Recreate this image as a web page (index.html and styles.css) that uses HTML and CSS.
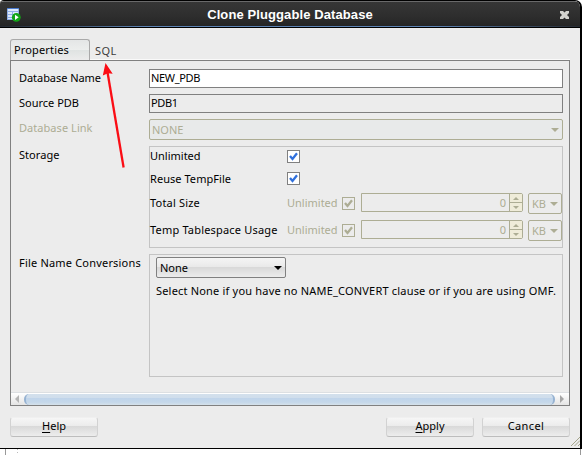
FILE: index.html
```html
<!DOCTYPE html>
<html lang="en">
<head>
<meta charset="utf-8">
<title>Clone Pluggable Database</title>
<link rel="stylesheet" href="styles.css">
</head>
<body>
<main class="window">
  <header class="titlebar">
    <svg class="app-icon" width="14" height="14" viewBox="0 0 14 14">
      <path fill="#8fade6" d="M0 0h12v12H0z"/>
      <path fill="#4a7bd0" d="M0 0h12v1H0z"/>
      <path fill="#dce8fb" d="M1 1h10v2H1zM1 4h4v2H1zM6 4h5v2H6zM1 7h4v2H1zM1 10h4v1H1z"/>
      <circle cx="9.3" cy="9.3" r="4.4" fill="#12a516"/>
      <path fill="#fff" d="M8 6.700v5.200l3.700-2.600z"/>
    </svg>
    <h1 class="title">Clone Pluggable Database</h1>
    <svg class="close" width="9" height="8" viewBox="0 0 9 8"><path d="M0 0h3l1.500 1.500L6 0h3v2L7 4l2 2v2H6L4.500 6.500 3 8H0V6l2-2-2-2z" fill="#d2d2ce"/></svg>
  </header>
  <nav class="tabs">
    <span class="tab tab-active"><span class="t-properties">Properties</span></span>
    <span class="tab tab-rest"><span class="t-sql">SQL</span></span>
  </nav>
  <section class="panel">
    <div class="form">
      <label class="t-dbname">Database Name</label>
      <div class="field field-edit"><span class="t-newpdb">NEW_PDB</span></div>
      <label class="t-source">Source PDB</label>
      <div class="field"><span class="t-pdb1">PDB1</span></div>
      <label class="t-link off">Database Link</label>
      <div class="combo combo-wide off"><span class="t-none-off">NONE</span><svg width="8" height="4" viewBox="0 0 8 4"><path d="M0 0h8L4 4z" fill="currentColor"/></svg></div>
      <label class="t-storage label-storage">Storage</label>
      <div class="group storage">
        <div class="row"><span class="name t-unl">Unlimited</span><span class="check"><svg width="9" height="9" viewBox="0 0 9 9"><path d="M1 4l2.500 3L8 1.200" fill="none" stroke="currentColor" stroke-width="2.300"/></svg></span></div>
        <div class="row"><span class="name t-reuse">Reuse TempFile</span><span class="check"><svg width="9" height="9" viewBox="0 0 9 9"><path d="M1 4l2.500 3L8 1.200" fill="none" stroke="currentColor" stroke-width="2.300"/></svg></span></div>
        <div class="row row-size">
          <span class="name t-total">Total Size</span>
          <span class="limit off t-unl">Unlimited</span><span class="check off"><svg width="9" height="9" viewBox="0 0 9 9"><path d="M1 4l2.500 3L8 1.200" fill="none" stroke="currentColor" stroke-width="2.300"/></svg></span>
          <div class="spinner off"><span class="value">0</span><span class="steps"><span class="step"><svg width="6" height="3" viewBox="0 0 6 3"><path d="M0 3h6L3 0z" fill="currentColor"/></svg></span><span class="step"><svg width="6" height="3" viewBox="0 0 6 3"><path d="M0 0h6L3 3z" fill="currentColor"/></svg></span></span></div>
          <div class="combo unit off"><span class="t-kb">KB</span><svg width="8" height="4" viewBox="0 0 8 4"><path d="M0 0h8L4 4z" fill="currentColor"/></svg></div>
        </div>
        <div class="row row-size">
          <span class="name t-temp">Temp Tablespace Usage</span>
          <span class="limit off t-unl">Unlimited</span><span class="check off"><svg width="9" height="9" viewBox="0 0 9 9"><path d="M1 4l2.500 3L8 1.200" fill="none" stroke="currentColor" stroke-width="2.300"/></svg></span>
          <div class="spinner off"><span class="value">0</span><span class="steps"><span class="step"><svg width="6" height="3" viewBox="0 0 6 3"><path d="M0 3h6L3 0z" fill="currentColor"/></svg></span><span class="step"><svg width="6" height="3" viewBox="0 0 6 3"><path d="M0 0h6L3 3z" fill="currentColor"/></svg></span></span></div>
          <div class="combo unit off"><span class="t-kb">KB</span><svg width="8" height="4" viewBox="0 0 8 4"><path d="M0 0h8L4 4z" fill="currentColor"/></svg></div>
        </div>
      </div>
      <label class="t-file label-file">File Name Conversions</label>
      <div class="group conversions">
        <div class="combo combo-none"><span class="t-none">None</span><svg width="8" height="4" viewBox="0 0 8 4"><path d="M0 0h8L4 4z" fill="currentColor"/></svg></div>
        <p class="hint t-hint">Select None if you have no NAME_CONVERT clause or if you are using OMF.</p>
      </div>
    </div>
    <div class="scrollbar">
      <svg width="4" height="8" viewBox="0 0 4 8"><path d="M4 0v8L0 4z" fill="#b4b4b4"/></svg>
      <span class="thumb"></span>
      <svg width="4" height="8" viewBox="0 0 4 8"><path d="M0 0v8l4-4z" fill="#a6a6a6"/></svg>
    </div>
  </section>
  <footer class="actions">
    <button class="btn btn-help"><span class="t-help"><u>H</u>elp</span></button>
    <button class="btn"><span class="t-apply"><u>A</u>pply</span></button>
    <button class="btn"><span class="t-cancel">Cancel</span></button>
  </footer>
  <svg class="grip" width="9" height="9" viewBox="0 0 9 9"><path d="M0 9L9 0M3.500 9L9 3.500M7 9l2-2" stroke="#a5a58c" fill="none"/></svg>
  <svg class="arrow" width="40" height="110" viewBox="0 0 40 110"><path d="M22.600 106.500L6.300 10" stroke="#fb0d15" stroke-width="2.300" fill="none"/><path d="M4.500 2l7.200 10.800-4.700-.6-5.200 2.200z" fill="#fb0d15"/></svg>
</main>
<div class="behind"></div>
</body>
</html>
```
FILE: styles.css
```css
* { box-sizing: border-box; }
body {
  margin: 0;
  width: 584px;
  height: 455px;
  overflow: hidden;
  background: #fff;
  color: #000;
  font: 11px/14px "Noto Sans", "Open Sans", sans-serif;
}
svg { display: block; flex: none; }
.window {
  position: relative;
  width: 582px;
  height: 449px;
  border: solid #000;
  border-width: 1px 2px 1px 0;
  border-radius: 4px 7px 0 0;
  background: #ececec;
  overflow: hidden;
}
.titlebar {
  display: flex;
  align-items: center;
  height: 27px;
  padding: 0 11px 0 7px;
  border-top: 1px solid #69696a;
  border-bottom: 1px solid #000;
  background: linear-gradient(90deg, #252a31, #5d83b4 25%, #5d83b4 75%, #252a31) bottom / 100% 1px no-repeat, linear-gradient(#363636, #2e2e2e 55%, #242424);
}
.title {
  flex: 1;
  margin: 0 1px 0 0;
  text-align: center;
  color: #fff;
  font: bold 13px/20px "Liberation Sans", sans-serif;
  letter-spacing: .1px;
}
.tabs { display: flex; height: 32px; padding: 11px 0 0 10px; }
.tab {
  display: flex;
  align-items: center;
  height: 21px;
  padding: 2px 0 0 5px;
  color: #3c3c3c;
}
.tab-rest { width: 480px; border-bottom: 1px solid #fafafa; padding-top: 3px; }
.tab-active {
  width: 80px;
  padding: 0 0 0 3px;
  border: 1px solid #a9a9a9;
  border-bottom: 0;
  border-radius: 3px 3px 0 0;
  background: linear-gradient(#e4e6e6, #eceeed 50%, #dfe3e2 51%, #ececec);
  color: #000;
}
.panel {
  display: flex;
  flex-direction: column;
  width: 560px;
  height: 346px;
  margin-left: 10px;
  border: 1px solid #808080;
}
.form {
  display: grid;
  grid-template-columns: 130px 414px;
  grid-template-rows: 19px 19px 21px 102px 123px;
  row-gap: 6px;
  padding: 8px 0 0 8px;
  flex: 1;
  white-space: nowrap;
}
.form > label { line-height: 17px; }
.form > .label-storage, .form > .label-file { line-height: 18px; }
.field { border: 1px solid #808080; padding-left: 1px; line-height: 16px; }
.field-edit { background: #fff; }
.combo {
  display: flex;
  align-items: center;
  justify-content: space-between;
  height: 21px;
  border: 1px solid #808080;
  border-radius: 2px;
  padding: 0 3px;
}
.off { color: #adad94; border-color: #adad94 !important; }
.combo-wide { padding: 0 3px 0 2px; background: #e8eaea; }
.group { border: 1px solid #c4c4c4; }
.row { display: flex; align-items: center; height: 23px; }
.storage .row:first-child { height: 18px; margin-bottom: 2px; }
.storage .row-size { height: 27px; }
.name { width: 137px; }
.limit { width: 55px; }
.row-size .name, .row-size .limit { padding-bottom: 2px; }
.check {
  display: grid;
  place-items: center;
  width: 13px;
  height: 13px;
  border: 1px solid #808080;
  background: #fff;
  color: #3070dc;
}
.check.off { background: #ececec; color: #adad94; }
.spinner {
  display: flex;
  align-items: center;
  width: 162px;
  height: 19px;
  margin: -2px 0 0 6px;
  border: 1px solid;
  border-radius: 0 2px 2px 0;
}
.value { flex: 1; text-align: right; padding-right: 3px; }
.steps { width: 13px; height: 17px; border-left: 1px solid; background: #efecd9; }
.step { display: grid; place-items: center; height: 8px; }
.step + .step { height: 9px; border-top: 1px solid; }
.unit { width: 34px; margin-left: 5px; }
.conversions { padding: 2px 6px; }
.combo-none { width: 130px; background: linear-gradient(#f5f5f5, #e9e9e9 48%, #d9d9d9 50%, #ececec); }
.hint { margin: 6px 0 0; }
.scrollbar {
  display: flex;
  align-items: center;
  gap: 5px;
  height: 13px;
  padding: 0 5px 0 4px;
  border-top: 1px solid #dcdfe2;
  background: linear-gradient(#fff, #e4e4e4);
}
.thumb {
  flex: 1;
  height: 11px;
  border: solid #97b3d2;
  border-width: 0 2px;
  border-radius: 5px;
  background: linear-gradient(#d3e0ec, #d0deec 35%, #c0d4ea 40%, #c5d8ea 75%, #d5e1ea);
}
.actions { display: flex; gap: 8px; margin: 11px 0 0 10px; }
.btn {
  width: 88px;
  height: 20px;
  padding: 0 0 2px;
  border: 1px solid #d2d2d2;
  border-top-color: #f0f0f0;
  border-bottom-color: #bdbdbd;
  border-radius: 3px;
  background: linear-gradient(#f6f6f6, #ececec 42%, #d9d9d9 46%, #ededed);
  color: #000;
  font: inherit;
}
.btn-help { margin-right: 280px; }
u { text-underline-offset: 2px; }
.grip { position: absolute; right: 0; bottom: 2px; }
.arrow { position: absolute; left: 101px; top: 60px; }
.behind {
  width: 576px;
  height: 6px;
  margin-left: 5px;
  border: solid #999;
  border-width: 0 1px;
  background: repeating-linear-gradient(#bbb 0 1px, transparent 1px 3px) 11px 0 / 1px 6px no-repeat;
}

.t-sql { letter-spacing: .4px; }
.t-properties { letter-spacing: .15px; }
.t-dbname { letter-spacing: -.05px; }
.t-source { letter-spacing: 0; }
.t-link, .t-storage { letter-spacing: .05px; }
.t-file, .t-total, .t-temp, .t-hint { letter-spacing: .19px; }
.t-unl { letter-spacing: 0; }
.t-reuse { letter-spacing: .05px; }
.t-newpdb, .t-pdb1 { letter-spacing: -.35px; }
.t-cancel { letter-spacing: .4px; }
```
